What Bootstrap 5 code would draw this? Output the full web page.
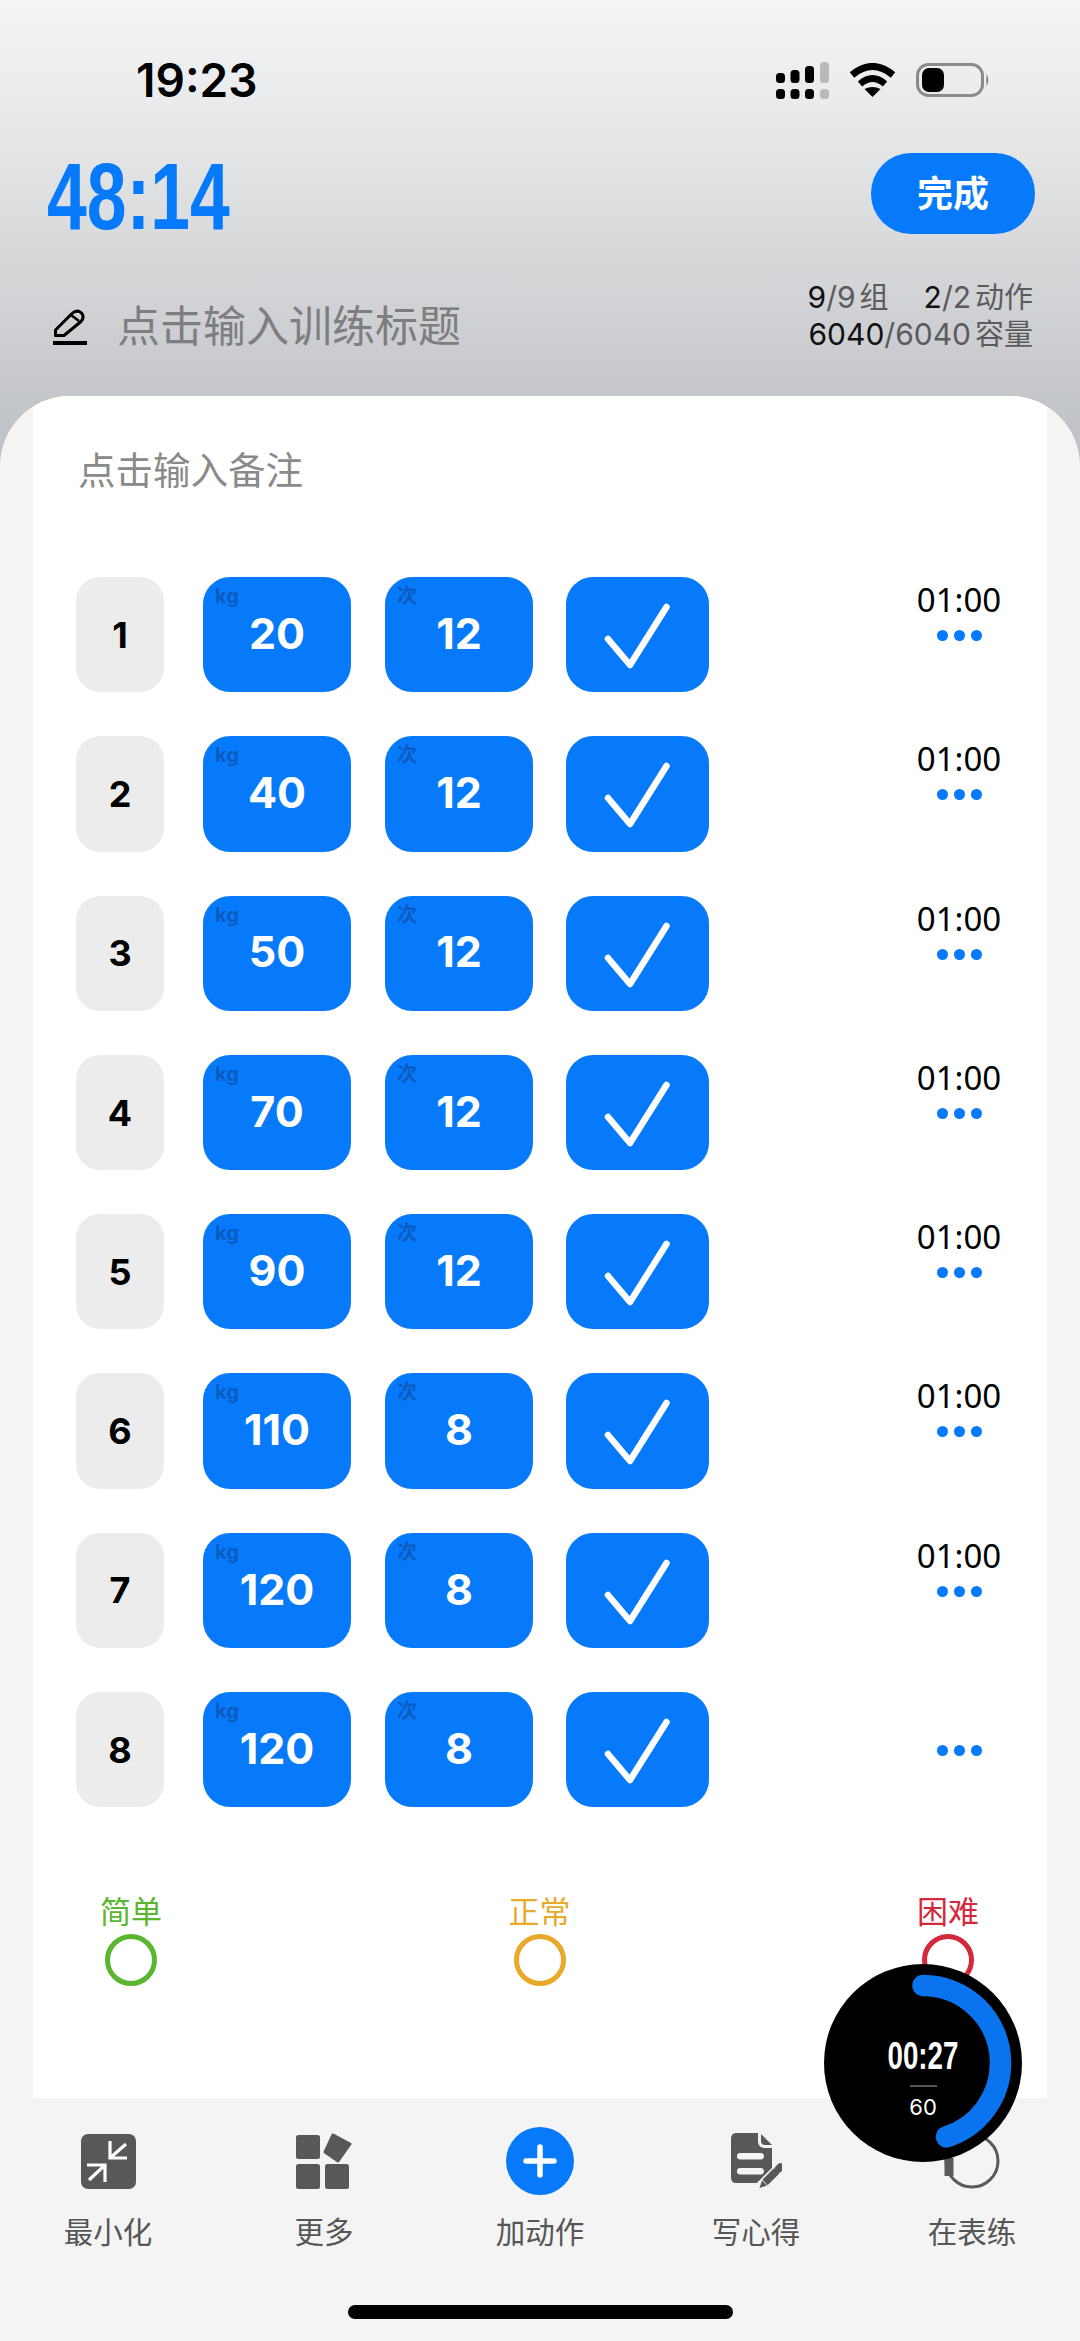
<!DOCTYPE html>
<html lang="zh-CN">
<head>
    <meta charset="UTF-8">
    <title>训练</title>
    <link href="https://cdn.jsdelivr.net/npm/bootstrap@5.3.2/dist/css/bootstrap.min.css" rel="stylesheet">
    <style>
        html, body {
            margin: 0;
            width: 1080px;
            height: 2341px;
            overflow: hidden;
        }
        body {
            font-family: Inter, "Noto Sans CJK SC", sans-serif;
            background: #f4f4f4;
        }
        .screen {
            width: 1080px;
            height: 2341px;
            background: linear-gradient(180deg, #f4f4f5 0, #e9eaeb 110px, #d9dbdd 230px, #cdcfd2 330px, #bcbfc3 470px);
        }
        .top-area {
            height: 396px;
            padding: 55px 45px 0 47px;
        }
        .status-row {
            height: 50px;
            padding-left: 89px;
        }
        .clock {
            font-size: 46px;
            font-weight: 600;
            line-height: 50px;
            color: #000;
        }
        .status-icons {
            margin-left: auto;
            margin-right: 45px;
            gap: 20px;
        }
        .head-row {
            margin-top: 48px;
            height: 81px;
        }
        .elapsed {
            font-family: "Liberation Sans", sans-serif;
            font-size: 94px;
            font-weight: 700;
            line-height: 81px;
            padding-top: 3px;
            color: #067afa;
            transform: scaleX(0.76);
            transform-origin: left center;
        }
        .finish-btn {
            width: 164px;
            height: 81px;
            border: 0;
            border-radius: 40px;
            background: #067afa;
            color: #fff;
            font-size: 36px;
            font-weight: 600;
            padding: 0;
        }
        .title-row {
            margin-top: 51px;
            height: 61px;
        }
        .title-main {
            margin-bottom: -5px;
        }
        .title-hint {
            font-size: 43px;
            line-height: 50px;
            color: #7d7e80;
            margin-left: 30px;
        }
        .pen-wrap {
            margin-left: 6px;
        }
        .stats {
            font-size: 30px;
            line-height: 37px;
            color: #5a5b5d;
            text-align: right;
            margin-bottom: -7px;
            margin-right: 2px;
        }
        .stats b {
            font-weight: 400;
            color: #111;
        }
        .stats em {
            font-style: normal;
            font-size: 29px;
            margin-left: 4px;
        }
        .stats-gap {
            margin-left: 35px;
        }
        .sheet {
            height: 1945px;
            background: #f4f4f4;
            border-radius: 70px 70px 0 0;
            overflow: hidden;
        }
        .paper {
            height: 1702px;
            margin: 0 33px;
            background: #fff;
        }
        .note-hint {
            padding: 53px 0 0 45px;
            height: 181px;
            font-size: 37.5px;
            line-height: 44px;
            color: #8a8a8a;
        }
        .set-list {
            padding-left: 43px;
        }
        .set-line {
            height: 115.3px;
            margin-bottom: 44px;
        }
        .set-no {
            width: 88px;
            height: 100%;
            border-radius: 24px;
            background: #ececec;
            font-size: 36px;
            font-weight: 700;
            color: #000;
        }
        .cell-blue {
            position: relative;
            width: 148px;
            height: 100%;
            border-radius: 27px;
            background: #067afa;
            color: #fff;
            font-size: 43px;
            font-weight: 700;
            padding-bottom: 3px;
        }
        .cell-gap-a { margin-left: 39px; }
        .cell-gap-b { margin-left: 34px; }
        .unit-tag {
            position: absolute;
            left: 12px;
            top: 5px;
            font-size: 20px;
            line-height: 28px;
            font-weight: 700;
            color: #0b5cc0;
        }
        .check-cell {
            width: 143px;
            height: 100%;
            margin-left: 33px;
            border-radius: 27px;
            background: #067afa;
        }
        .rest-col {
            width: 120px;
            margin-left: 190px;
            height: 100%;
            text-align: center;
        }
        .rest-time {
            height: 32px;
            margin-top: 7px;
            font-family: "Noto Sans", sans-serif;
            font-size: 33px;
            line-height: 32px;
            color: #000;
        }
        .rest-dots {
            margin-top: 14px;
            gap: 6px;
        }
        .rest-dots span {
            width: 11px;
            height: 11px;
            border-radius: 50%;
            background: #067afa;
        }
        .effort-row {
            padding: 43px 68px 0 67px;
        }
        .effort {
            width: 62px;
            font-size: 31px;
            line-height: 36px;
            text-align: center;
        }
        .effort-dot {
            width: 52px;
            height: 52px;
            margin: 4px auto 0;
            border-radius: 50%;
            border: 5px solid currentColor;
        }
        .effort-easy { color: #5ab52f; }
        .effort-normal { color: #e9a92b; }
        .effort-hard { color: #d4283c; }
        .tabbar {
            height: 243px;
            padding-top: 29px;
        }
        .tab-item {
            flex: 1 1 0;
            color: #565656;
            font-size: 29.5px;
            line-height: 36px;
        }
        .tab-icon {
            height: 68px;
            margin-bottom: 19px;
        }
        .home-bar {
            width: 385px;
            height: 14px;
            margin: 55px auto 0;
            border-radius: 7px;
            background: #000;
        }
        .rest-timer {
            position: absolute;
            left: 824px;
            top: 1964px;
            width: 198px;
            height: 198px;
            border-radius: 50%;
            background: #000;
        }
        .rest-timer svg {
            position: absolute;
            left: 0;
            top: 0;
        }
        .timer-now {
            position: absolute;
            left: 0;
            right: 0;
            top: 72px;
            text-align: center;
            font-family: "Liberation Sans", sans-serif;
            font-size: 38px;
            line-height: 40px;
            font-weight: 700;
            color: #fff;
            transform: scaleX(0.73);
        }
        .timer-rule {
            position: absolute;
            left: 86px;
            top: 121px;
            width: 27px;
            height: 2px;
            background: #555;
        }
        .timer-total {
            position: absolute;
            left: 0;
            right: 0;
            top: 128px;
            text-align: center;
            font-size: 22px;
            line-height: 30px;
            color: #fff;
        }
    </style>
</head>
<body>
<div class="screen position-relative">
    <div class="top-area">
        <div class="status-row d-flex align-items-center">
            <span class="clock">19:23</span>
            <div class="status-icons d-flex align-items-center">
                <!-- signal bars -->
                <svg width="53" height="37" viewBox="0 0 53 37">
                    <g fill="#000">
                        <rect x="0" y="11" width="9" height="10" rx="3.5"/>
                        <rect x="14.5" y="8" width="9" height="13" rx="3.5"/>
                        <rect x="29" y="4" width="9" height="17" rx="3.5"/>
                        <rect x="0" y="27" width="9" height="10" rx="3.5"/>
                        <rect x="14.5" y="27" width="9" height="10" rx="3.5"/>
                        <rect x="29" y="27" width="9" height="10" rx="3.5"/>
                    </g>
                    <g fill="#b9b9b9">
                        <rect x="44" y="0" width="9" height="21" rx="3.5"/>
                        <rect x="44" y="27" width="9" height="10" rx="3.5"/>
                    </g>
                </svg>
                <!-- wifi -->
                <svg width="47" height="34" viewBox="0 0 47 34">
                    <path d="M3 12 Q23.5 -5 44 12" fill="none" stroke="#000" stroke-width="7"/>
                    <path d="M11 21 Q23.5 10 36 21" fill="none" stroke="#000" stroke-width="6.5"/>
                    <path d="M15.5 26 Q23.5 22 31.500 26 L23.500 34 Z" fill="#000"/>
                </svg>
                <!-- battery -->
                <svg width="74" height="34" viewBox="0 0 74 34">
                    <rect x="1.500" y="1.500" width="65" height="31" rx="11" fill="none" stroke="#8b8b8b" stroke-width="3"/>
                    <rect x="6" y="5" width="22" height="24" rx="7" fill="#000"/>
                    <path d="M70.500 11 Q74 17 70.500 23 Z" fill="#777"/>
                </svg>
            </div>
        </div>

        <div class="head-row d-flex justify-content-between align-items-start">
            <div class="elapsed">48:14</div>
            <button class="finish-btn" type="button">完成</button>
        </div>

        <div class="title-row d-flex justify-content-between align-items-end">
            <div class="title-main d-flex align-items-center">
                <svg class="pen-wrap" width="34" height="37" viewBox="0 0 34 37" fill="none" stroke="#000">
                    <path d="M2.500 22 L19 5.500 Q24 1 28.500 5 Q32 9 28 13.500 L11 27.500 L2.500 27.500 Z" stroke-width="3" stroke-linejoin="round"/>
                    <path d="M18 7 L26 13" stroke-width="2.600"/>
                    <rect x="0" y="33" width="34" height="4" fill="#000" stroke="none"/>
                </svg>
                <span class="title-hint">点击输入训练标题</span>
            </div>
            <div class="stats">
                <div><b>9</b>/9<em>组</em><span class="stats-gap"><b>2</b>/2<em>动作</em></span></div>
                <div><b>6040</b>/6040<em>容量</em></div>
            </div>
        </div>
    </div>

    <div class="sheet">
        <div class="paper">
            <div class="note-hint">点击输入备注</div>
            <div class="set-list" id="setList"></div>
            <div class="effort-row d-flex justify-content-between">
                <div class="effort effort-easy">简单<div class="effort-dot"></div></div>
                <div class="effort effort-normal">正常<div class="effort-dot"></div></div>
                <div class="effort effort-hard">困难<div class="effort-dot"></div></div>
            </div>
        </div>

        <div class="tabbar">
            <div class="d-flex">
                <div class="tab-item d-flex flex-column align-items-center">
                    <div class="tab-icon d-flex align-items-center">
                        <svg width="55" height="55" viewBox="0 0 55 55">
                            <rect width="55" height="55" rx="7" fill="#585858"/>
                            <g fill="none" stroke="#fff" stroke-width="3.200">
                                <path d="M45 10 L29 24 M29 7 V24 H46"/>
                                <path d="M8 46 L24 31 M6 31 H24 V48"/>
                            </g>
                        </svg>
                    </div>
                    最小化
                </div>
                <div class="tab-item d-flex flex-column align-items-center">
                    <div class="tab-icon d-flex align-items-center">
                        <svg width="56" height="56" viewBox="0 0 56 56">
                            <g fill="#585858">
                                <rect x="0" y="2" width="24" height="24" rx="2.500"/>
                                <rect x="0" y="31" width="24" height="25" rx="2.500"/>
                                <rect x="29" y="31" width="24" height="25" rx="2.500"/>
                                <path d="M37 2 L54 11 L42 28 L29 19 Z" stroke="#585858" stroke-width="3" stroke-linejoin="round"/>
                            </g>
                        </svg>
                    </div>
                    更多
                </div>
                <div class="tab-item d-flex flex-column align-items-center">
                    <div class="tab-icon">
                        <svg width="68" height="68" viewBox="0 0 68 68">
                            <circle cx="34" cy="34" r="34" fill="#067afa"/>
                            <path d="M34 20 V48 M20 34 H48" stroke="#fff" stroke-width="5.500" stroke-linecap="round"/>
                        </svg>
                    </div>
                    加动作
                </div>
                <div class="tab-item d-flex flex-column align-items-center">
                    <div class="tab-icon d-flex align-items-center">
                        <svg width="52" height="56" viewBox="0 0 52 56">
                            <path d="M6 0 H28 V8 Q28 14 34 15 H42 V44 Q42 50 36 50 H6 Q1 50 1 44 V6 Q1 0 6 0 Z" fill="#585858"/>
                            <path d="M31 1 L42 12 H35 Q31 12 31 8 Z" fill="#585858"/>
                            <rect x="7" y="20" width="27" height="6.500" rx="3.200" fill="#f4f4f4"/>
                            <rect x="7" y="35" width="27" height="6.500" rx="3.200" fill="#f4f4f4"/>
                            <path d="M52 34 L29 57" stroke="#f4f4f4" stroke-width="13"/>
                            <path d="M46.500 38 L35 49.500" stroke="#585858" stroke-width="7.500"/>
                            <path d="M32 47.500 L37 52.500 L29.500 55 Z" fill="#585858"/>
                            <path d="M48.500 36 L50.500 34" stroke="#585858" stroke-width="7.500" stroke-linecap="round"/>
                        </svg>
                    </div>
                    写心得
                </div>
                <div class="tab-item d-flex flex-column align-items-center">
                    <div class="tab-icon">
                        <svg width="68" height="68" viewBox="0 0 68 68" fill="none">
                            <circle cx="34" cy="34" r="26" stroke="#5a5a5a" stroke-width="3"/>
                            <path d="M11 31 V49" stroke="#5a5a5a" stroke-width="9"/>
                        </svg>
                    </div>
                    在表练
                </div>
            </div>
            <div class="home-bar"></div>
        </div>
    </div>

    <div class="rest-timer">
        <svg width="198" height="198" viewBox="0 0 198 198">
            <circle id="timerArc" cx="99" cy="99" r="77.500" fill="none" stroke="#0a73ee" stroke-width="21.500" stroke-linecap="round" transform="rotate(-90 99 99)"/>
        </svg>
        <div class="timer-now">00:27</div>
        <div class="timer-rule"></div>
        <div class="timer-total">60</div>
    </div>
</div>

<script>
    const sets = [
        { no: 1, kg: 20, reps: 12, rest: '01:00' },
        { no: 2, kg: 40, reps: 12, rest: '01:00' },
        { no: 3, kg: 50, reps: 12, rest: '01:00' },
        { no: 4, kg: 70, reps: 12, rest: '01:00' },
        { no: 5, kg: 90, reps: 12, rest: '01:00' },
        { no: 6, kg: 110, reps: 8, rest: '01:00' },
        { no: 7, kg: 120, reps: 8, rest: '01:00' },
        { no: 8, kg: 120, reps: 8, rest: '' }
    ];

    const list = document.getElementById('setList');
    sets.forEach(s => {
        const line = document.createElement('div');
        line.className = 'set-line d-flex';
        line.innerHTML = `
            <div class="set-no d-flex align-items-center justify-content-center">${s.no}</div>
            <div class="cell-blue cell-gap-a d-flex align-items-center justify-content-center"><span class="unit-tag">kg</span>${s.kg}</div>
            <div class="cell-blue cell-gap-b d-flex align-items-center justify-content-center"><span class="unit-tag">次</span>${s.reps}</div>
            <div class="check-cell">
                <svg width="143" height="115" viewBox="0 0 143 115">
                    <path d="M42 62 L64 88 L100.500 30" fill="none" stroke="#fff" stroke-width="6.500" stroke-linecap="round" stroke-linejoin="round"/>
                </svg>
            </div>
            <div class="rest-col">
                <div class="rest-time">${s.rest}</div>
                <div class="rest-dots d-flex justify-content-center"><span></span><span></span><span></span></div>
            </div>
        `;
        list.appendChild(line);
    });

    // 27 of 60 seconds, drawn clockwise from twelve o'clock
    const arc = document.getElementById('timerArc');
    const len = 2 * Math.PI * 77.5;
    arc.setAttribute('stroke-dasharray', `${len * 27 / 60} ${len}`);
</script>
</body>
</html>
